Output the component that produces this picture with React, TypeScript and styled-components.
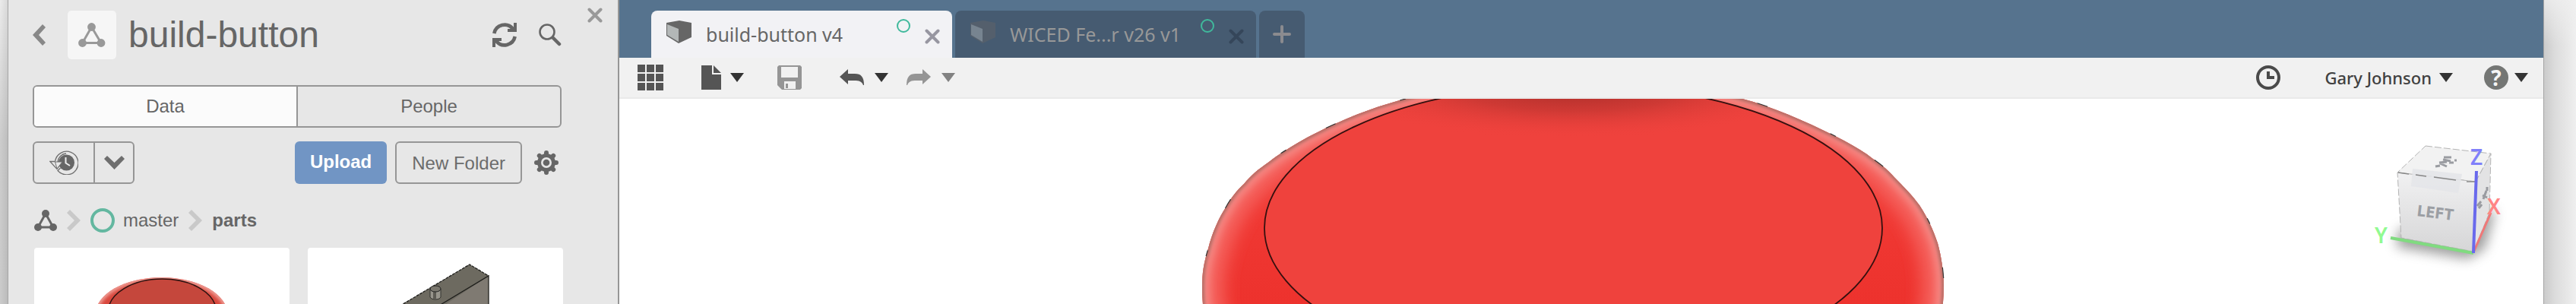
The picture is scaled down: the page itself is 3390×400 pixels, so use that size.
import React from "react";
import styled, { createGlobalStyle } from "styled-components";

const ui = `"Liberation Sans", Arial, sans-serif`;
const humanist = `"Noto Sans", "Open Sans", sans-serif`;

const GlobalStyle = createGlobalStyle`
  *, *::before, *::after { box-sizing: border-box; }
  body { margin: 0; background: #e4e4e4; }
  button { font: inherit; color: inherit; background: none; border: 0; padding: 0; margin: 0; cursor: pointer; }
  a { color: inherit; text-decoration: none; }
  svg { display: block; flex: none; }
`;

const Desktop = styled.div`
  display: grid;
  grid-template-columns: 11px minmax(0, 1fr) 43px;
  height: 100vh;
  overflow: hidden;
`;

const LeftEdge = styled.div`
  background: linear-gradient(to right, rgba(0, 0, 0, 0), rgba(0, 0, 0, 0.08)),
    linear-gradient(#ebebeb, #cdcdcd 45%, #cbcbcb);
  border-right: 1px solid #a6a6a6;
`;

const RightEdge = styled.div`
  border-left: 1px solid #a4a4a4;
  background: linear-gradient(rgba(240, 240, 240, 0.75), rgba(240, 240, 240, 0) 60px),
    linear-gradient(to right, #cbcbcb, #dcdcdc 35%, #efefef);
`;

const AppWindow = styled.div`
  display: flex;
  min-width: 0;
  background: #fff;
`;

const DataPanel = styled.aside`
  display: flex;
  flex-direction: column;
  flex: none;
  width: 804px;
  padding: 14px 74px 0 32px;
  position: relative;
  background: #e7e7e7;
  border-right: 2px solid #969696;
  color: #666;
  font: 24px/28px ${ui};
`;

const PanelHeader = styled.header`
  display: flex;
  align-items: center;
  margin-bottom: 34px;
`;

const ProjectBadge = styled.div`
  display: flex;
  align-items: center;
  justify-content: center;
  width: 64px;
  height: 64px;
  margin: 0 16px 0 29px;
  border-radius: 5px;
  background: #f6f6f6;
  color: #999;
`;

const Title = styled.h1`
  flex: 1;
  margin: 0;
  font-size: 48px;
  line-height: 64px;
  font-weight: 400;
`;

const IconButton = styled.button<{ $tone?: string; $gap?: number; $end?: number }>`
  display: flex;
  align-items: center;
  justify-content: center;
  margin-left: ${({ $gap = 0 }) => $gap}px;
  margin-right: ${({ $end = 0 }) => $end}px;
  color: ${({ $tone = "#666" }) => $tone};
`;

const ClosePanel = styled(IconButton)`
  position: absolute;
  top: 10px;
  right: 20px;
`;

const Segmented = styled.div`
  display: flex;
  height: 56px;
  margin-bottom: 18px;
  border: 2px solid #969696;
  border-radius: 6px;
  overflow: hidden;
`;

const Segment = styled.button<{ $active?: boolean }>`
  flex: 1;
  background: ${({ $active }) => ($active ? "#fbfbfb" : "transparent")};
  & + & { border-left: 2px solid #969696; }
`;

const ActionRow = styled.div`
  display: flex;
  align-items: center;
  height: 56px;
  margin-bottom: 32px;
`;

const SplitButton = styled.div`
  display: flex;
  height: 56px;
  margin-right: auto;
  border: 2px solid #969696;
  border-radius: 6px;
`;

const SplitPart = styled.button<{ $width: number }>`
  display: flex;
  align-items: center;
  justify-content: center;
  width: ${({ $width }) => $width}px;
  & + & { border-left: 2px solid #969696; }
`;

const ActionButton = styled.button<{ $primary?: boolean }>`
  height: 56px;
  padding: ${({ $primary }) => ($primary ? "0 20px 2px" : "2px 20px 0")};
  border: ${({ $primary }) => ($primary ? "0" : "2px solid #969696")};
  border-radius: 6px;
  background: ${({ $primary }) => ($primary ? "#7195c4" : "transparent")};
  color: ${({ $primary }) => ($primary ? "#fff" : "#6c6c6c")};
  font-weight: ${({ $primary }) => ($primary ? 700 : 400)};
  & + & { margin-left: 11px; }
`;

const Breadcrumb = styled.nav`
  display: flex;
  align-items: center;
  gap: 13px;
  height: 32px;
  margin-bottom: 20px;
  padding-left: 2px;
`;

const Crumb = styled.a<{ $current?: boolean }>`
  display: flex;
  align-items: center;
  gap: 11px;
  font-weight: ${({ $current }) => ($current ? 700 : 400)};
`;

const CardGrid = styled.div`
  display: grid;
  grid-template-columns: 336px 336px;
  gap: 24px;
  flex: 1;
  min-height: 0;
  padding-left: 2px;
`;

const Card = styled.a`
  display: flex;
  justify-content: center;
  overflow: hidden;
  border-radius: 4px 4px 0 0;
  background: #fff;
`;

const Workspace = styled.main`
  display: flex;
  flex-direction: column;
  flex: 1;
  min-width: 0;
`;

const TabBar = styled.div`
  display: flex;
  align-items: flex-end;
  gap: 4px;
  height: 76px;
  padding-left: 42px;
  background: #56738e;
  font: 25px/34px ${humanist};
`;

const DocumentTab = styled.div<{ $active?: boolean }>`
  display: flex;
  align-items: center;
  width: 396px;
  height: 62px;
  padding: 0 16px 0 20px;
  border-radius: 8px 8px 0 0;
  background: ${({ $active }) => ($active ? "#f2f2f5" : "#465b71")};
  color: ${({ $active }) => ($active ? "#666" : "#989898")};
`;

const TabIcon = styled.span<{ $dim?: boolean }>`
  opacity: ${({ $dim }) => ($dim ? 0.45 : 1)};
  padding-bottom: 6px;
`;

const TabLabel = styled.button`
  flex: 1;
  padding-left: 19px;
  text-align: left;
  white-space: nowrap;
`;

const SyncDot = styled.span`
  width: 18px;
  height: 18px;
  margin: 0 19px 22px 0;
  border: 2px solid #40b99c;
  border-radius: 50%;
`;

const TabClose = styled(IconButton)`
  padding-top: 6px;
`;

const NewTab = styled.button`
  display: flex;
  align-items: center;
  justify-content: center;
  width: 60px;
  height: 62px;
  border-radius: 8px 8px 0 0;
  background: #465b71;
  color: #8b8b8f;
`;

const Toolbar = styled.div`
  display: flex;
  align-items: center;
  height: 54px;
  padding: 0 20px 0 24px;
  border-bottom: 2px solid #e9e9e9;
  background: #f1f1f1;
  color: #555;
`;

const ToolGroup = styled.button<{ $gap: number; $before?: number; $tone?: string }>`
  display: flex;
  align-items: center;
  gap: ${({ $gap }) => $gap}px;
  margin-left: ${({ $before = 0 }) => $before}px;
  color: ${({ $tone = "#555" }) => $tone};
`;

const Spacer = styled.div`
  flex: 1;
`;

const UserName = styled.span`
  color: #404040;
  font: 500 22px/30px ${humanist};
`;

const HelpMark = styled.span`
  display: flex;
  align-items: center;
  justify-content: center;
  width: 32px;
  height: 32px;
  border-radius: 50%;
  background: #747674;
  color: #f5f5f5;
  font: 700 28px/32px ${humanist};
`;

const Viewport = styled.section`
  display: flex;
  justify-content: center;
  position: relative;
  flex: 1;
  min-height: 0;
  overflow: hidden;
  background: #fff;
`;

const CubeHolder = styled.div`
  position: absolute;
  top: 55px;
  right: 47px;
`;

const Nodes = ({ small }: { small?: boolean }) =>
  small ? (
    <svg width="30" height="28" fill="currentColor">
      <path d="M15 5 25 23H5Z" fill="none" stroke="currentColor" strokeWidth="3" />
      <circle cx="15" cy="5" r="5" /><circle cx="5" cy="23" r="5" /><circle cx="25" cy="23" r="5" />
    </svg>
  ) : (
    <svg width="36" height="32" fill="currentColor">
      <path d="M17.5 5.5 30 26.5H5.5Z" fill="none" stroke="currentColor" strokeWidth="3" />
      <circle cx="17.5" cy="5.5" r="5.4" /><circle cx="5.5" cy="26.5" r="5.4" /><circle cx="30" cy="26.5" r="5.4" />
    </svg>
  );

const Refresh = () => (
  <svg width="32" height="32">
    {[0, 180].map((turn) => (
      <g key={turn} transform={`rotate(${turn} 16 16)`}>
        <path d="M2.3 14A14 14 0 0 1 27 8" fill="none" stroke="currentColor" strokeWidth="4.6" />
        <path d="M28 0h4v12H20V8h3l5-2z" fill="currentColor" />
      </g>
    ))}
  </svg>
);

const Search = () => (
  <svg width="30" height="30" fill="none" stroke="currentColor">
    <circle cx="11" cy="11" r="9.5" strokeWidth="2.6" />
    <path d="M19 19 27 27" strokeWidth="4.5" strokeLinecap="round" />
  </svg>
);

const Cross = () => (
  <svg width="20" height="20" fill="none" stroke="currentColor" strokeWidth="4" strokeLinecap="round">
    <path d="M2.5 2.5 17.5 17.5M17.5 2.5 2.5 17.5" />
  </svg>
);

const History = () => (
  <svg width="38" height="32" fill="none">
    <path d="M7.5 14.5A15.3 15.3 0 1 1 11 26.5L14.5 23M7.5 14.5H.8L10 24.5 17 15H11A11.8 11.8 0 0 1 22 4" stroke="#707070" strokeWidth="1.3" />
    <circle cx="22.5" cy="16" r="10.5" fill="#666" />
    <path d="M21.5 9V16.5L27 20" stroke="#eee" strokeWidth="2" />
    <path d="M7.5 15H17L10 24Z" fill="#e7e7e7" stroke="#707070" />
  </svg>
);

const Gear = () => (
  <svg width="32" height="32">
    <g stroke="currentColor" strokeWidth="6" strokeLinecap="round">
      {[0, 45, 90, 135].map((turn) => (
        <path key={turn} d="M16 3V29" transform={`rotate(${turn} 16 16)`} />
      ))}
    </g>
    <circle cx="16" cy="16" r="12" fill="currentColor" />
    <circle cx="16" cy="16" r="7" fill="#e7e7e7" />
    <circle cx="16" cy="16" r="4.3" fill="currentColor" />
  </svg>
);

const CrumbArrow = () => (
  <svg width="18" height="28"><path d="M0 4 4 0 18 14 4 28 0 24 10 14Z" fill="#c9c9c9" /></svg>
);

const Ring = () => (
  <svg width="32" height="32"><circle cx="16" cy="16" r="14" fill="none" stroke="#63b7a0" strokeWidth="4" /></svg>
);

const Caret = ({ tone = "#333" }: { tone?: string }) => (
  <svg width="18" height="12"><path d="M0 0H18L9 12Z" fill={tone} /></svg>
);

const CubeIcon = () => (
  <svg width="33" height="30">
    <path d="M0 3 17 0 33 3V22L16 30 0 20Z" fill="#666" />
    <path d="M1 5 16 11V28L1 19Z" fill="#b3b7b7" />
  </svg>
);

const AppGrid = () => (
  <svg width="34" height="34" fill="currentColor">
    {[0, 12, 24].map((y) => [0, 12, 24].map((x) => <rect key={`${x}-${y}`} x={x} y={y} width="10" height="10" />))}
  </svg>
);

const FileIcon = () => (
  <svg width="26" height="32" fill="currentColor"><path d="M0 0H14V12H26V32H0ZM16 0 26 10H16Z" /></svg>
);

const SaveIcon = () => (
  <svg width="32" height="32" fill="currentColor" fillRule="evenodd">
    <path d="M2 0H30L32 2V30L30 32H6L0 26V2ZM5 2V16H27V2ZM9 21V31H24V21ZM11 24H14V30H11Z" />
  </svg>
);

const Arrow = ({ flip }: { flip?: boolean }) => (
  <svg width="32" height="22" fill="currentColor">
    <path
      transform={flip ? "matrix(-1 0 0 1 32 0)" : undefined}
      d="M0 10 11 0V6H20C28 6 32 10 32 21H31C29 16 26 15 19 15H11V20Z"
    />
  </svg>
);

const Clock = () => (
  <svg width="32" height="32">
    <circle cx="16" cy="16" r="14" fill="none" stroke="#4a4a4a" strokeWidth="4" />
    <path d="M14 8H18V14H24V18H14Z" fill="#4a4a4a" />
  </svg>
);

const domeOutline =
  "M279 0C230 12 180 34 142 55C130 62 110 74 99 83C83 94 75 101 66 112C56 121 48 132 42 143C34 155 24 176 19 197C13 217 11 228 11 250C11 300 30 360 60 420H940C970 360 987 300 987 245C987 230 984 208 979 190C973 172 965 155 955 140C940 120 930 112 919 100C908 88 896 81 886 73C872 64 860 57 846 50C802 28 760 10 722 0C640 -26 360 -26 279 0Z";

const DomeModel = () => (
  <svg width="1020" height="270" viewBox="0 0 1020 270" role="img" aria-label="Red button model">
    <defs>
      <clipPath id="dome"><path d={domeOutline} /></clipPath>
      <clipPath id="face"><ellipse cx="499.5" cy="170" rx="406.5" ry="189" /></clipPath>
      <filter id="soft12" x="-10%" y="-20%" width="120%" height="140%"><feGaussianBlur stdDeviation="11" /></filter>
      <filter id="soft4" x="-10%" y="-20%" width="120%" height="140%"><feGaussianBlur stdDeviation="5" /></filter>
      <filter id="soft1"><feGaussianBlur stdDeviation="2" /></filter>
      <linearGradient id="side" gradientUnits="userSpaceOnUse" x1="0" y1="0" x2="0" y2="270">
        <stop offset="0" stopColor="#f3403b" />
        <stop offset="1" stopColor="#ed322d" />
      </linearGradient>
      <radialGradient id="shade">
        <stop offset="0" stopColor="#a52c28" stopOpacity="0.95" />
        <stop offset="0.45" stopColor="#b8332e" stopOpacity="0.6" />
        <stop offset="1" stopColor="#ef423d" stopOpacity="0" />
      </radialGradient>
    </defs>
    <g clipPath="url(#dome)">
      <path d={domeOutline} fill="url(#side)" />
      <path d={domeOutline} fill="none" stroke="#f5635e" strokeWidth="56" filter="url(#soft12)" />
      <path d={domeOutline} fill="none" stroke="#f58682" strokeWidth="20" filter="url(#soft4)" />
      <path d={domeOutline} fill="none" stroke="#a8685e" strokeWidth="5" filter="url(#soft1)" />
    </g>
    <g clipPath="url(#face)">
      <rect width="1020" height="270" fill="#ef423d" />
      <ellipse cx="499" cy="-14" rx="330" ry="66" fill="url(#shade)" />
    </g>
    <ellipse cx="499.5" cy="170" rx="406.5" ry="189" fill="none" stroke="#35100f" strokeWidth="1.8" />
    <path d={domeOutline} fill="none" stroke="#333" strokeWidth="1.2" strokeDasharray="8 90 14 60" />
  </svg>
);

const ViewCube = () => (
  <svg width="180" height="180" viewBox="0 0 180 180" role="img" aria-label="View cube">
    <defs>
      <linearGradient id="front" x2="0" y2="1"><stop stopColor="#f1f1f2" /><stop offset="1" stopColor="#d6d6d7" /></linearGradient>
      <filter id="shadow" x="-30%" y="-30%" width="160%" height="180%"><feGaussianBlur stdDeviation="8" /></filter>
    </defs>
    <path d="M36 118 100 100 164 92 150 142 128 156 34 140Z" fill="#777" opacity="0.7" filter="url(#shadow)" />
    <g stroke="#b4b4b4" strokeWidth="1" strokeDasharray="9 3">
      <path d="M72 7 158 17 138 54 35 42Z" fill="#f2f2f2" />
      <path d="M35 42 138 54 135 146 40 128Z" fill="url(#front)" />
      <path d="M138 54 158 17 156 95 135 146Z" fill="#e3e3e4" />
    </g>
    <path d="M55 37 120 44 115 69 53 60Z" fill="#e4e5e9" opacity="0.85" />
    <path d="M36 42 50 44M59 45 73 47M83 48 112 52M126 54 138 54" stroke="#888" strokeWidth="1.5" />
    <path d="M96 22H106M95 25 105 27M90 29 100 28M85 34 91 33M91 30 100 34M103 29 109 29M110 26H113" stroke="#9a9ca1" strokeWidth="3" />
    <path d="M140 86 145 80M142 89 146 84M148 77 152 66M147 72 153 75M153 61V66" stroke="#999ba0" strokeWidth="3" />
    <text x="60" y="99" transform="rotate(7 60 99)" fontFamily="DejaVu Sans Condensed, DejaVu Sans, sans-serif" fontWeight="700" fontSize="20" fill="#9b9ea3">LEFT</text>
    <path d="M26 128 135 148" stroke="#80db80" strokeWidth="4" />
    <path d="M135 147 158 95" stroke="#f07878" strokeWidth="3" />
    <path d="M139 40 135 148" stroke="#6969ec" strokeWidth="4" />
    <g fontFamily="Noto Sans, sans-serif" fontSize="28" fontWeight="600">
      <text x="131" y="32" fill="#8080fa">Z</text>
      <text x="153" y="97" fill="#ff8585">X</text>
      <text x="5" y="135" fill="#91fa91">Y</text>
    </g>
  </svg>
);

const DomeThumb = () => (
  <svg width="336" height="80" viewBox="0 0 336 80" role="img" aria-label="Button cap">
    <defs>
      <filter id="thumbSoft"><feGaussianBlur stdDeviation="2" /></filter>
      <clipPath id="thumb"><ellipse cx="167.5" cy="88" rx="87" ry="49" /></clipPath>
    </defs>
    <ellipse cx="167.5" cy="88" rx="87" ry="49" fill="#d9483e" />
    <g clipPath="url(#thumb)">
      <ellipse cx="167.5" cy="88" rx="87" ry="49" fill="none" stroke="#f0a29a" strokeWidth="6" filter="url(#thumbSoft)" />
    </g>
    <ellipse cx="168.5" cy="84" rx="71" ry="43" fill="#c5473c" stroke="#2b1210" strokeWidth="1.5" />
  </svg>
);

const BlockThumb = () => (
  <svg width="336" height="80" viewBox="0 0 336 80" role="img" aria-label="Base plate">
    <path d="M117 79 213 22 238 37V80H117Z" fill="#6d6a60" />
    <path d="M173 80 238 37V80Z" fill="#7f7a72" />
    <g fill="none" stroke="#1f1f1c" strokeWidth="1.3">
      <path d="M117 79 213 22 238 37" strokeDasharray="4 1" />
      <path d="M173 76 238 37V80" />
    </g>
    <path d="M161 54V65C163 69 173 69 175 65V54Z" fill="#98958c" stroke="#33322e" />
    <path d="M165 57V67H169V57Z" fill="#5d5b54" />
    <ellipse cx="168" cy="54" rx="7" ry="4" fill="#7a776e" stroke="#222" />
  </svg>
);

export default function App() {
  return (
    <>
      <GlobalStyle />
      <Desktop>
        <LeftEdge />
        <AppWindow>
          <DataPanel>
            <PanelHeader>
              <IconButton aria-label="Back" $tone="#888">
                <svg width="17" height="28"><path d="M0 14 13 0 17 4 8 14 17 24 13 28Z" fill="currentColor" /></svg>
              </IconButton>
              <ProjectBadge><Nodes /></ProjectBadge>
              <Title>build-button</Title>
              <IconButton aria-label="Refresh"><Refresh /></IconButton>
              <IconButton aria-label="Search" $gap={29}><Search /></IconButton>
            </PanelHeader>
            <ClosePanel aria-label="Close panel" $tone="#999"><Cross /></ClosePanel>
            <Segmented>
              <Segment $active>Data</Segment>
              <Segment>People</Segment>
            </Segmented>
            <ActionRow>
              <SplitButton>
                <SplitPart $width={78} aria-label="Recent"><History /></SplitPart>
                <SplitPart $width={52} aria-label="Recent options">
                  <svg width="27" height="18"><path d="M0 4 4 0 13.5 9 23 0 27 4 13.5 18Z" fill="#6e6e6e" /></svg>
                </SplitPart>
              </SplitButton>
              <ActionButton $primary>Upload</ActionButton>
              <ActionButton>New Folder</ActionButton>
              <IconButton aria-label="Settings" $gap={16} $end={4}><Gear /></IconButton>
            </ActionRow>
            <Breadcrumb aria-label="Breadcrumb">
              <Crumb href="#project" aria-label="Project"><Nodes small /></Crumb>
              <CrumbArrow />
              <Crumb href="#master"><Ring />master</Crumb>
              <CrumbArrow />
              <Crumb href="#parts" $current>parts</Crumb>
            </Breadcrumb>
            <CardGrid>
              <Card href="#cap"><DomeThumb /></Card>
              <Card href="#plate"><BlockThumb /></Card>
            </CardGrid>
          </DataPanel>
          <Workspace>
            <TabBar>
              <DocumentTab $active>
                <TabIcon><CubeIcon /></TabIcon>
                <TabLabel>build-button v4</TabLabel>
                <SyncDot />
                <TabClose aria-label="Close build-button v4" $tone="#9796a1"><Cross /></TabClose>
              </DocumentTab>
              <DocumentTab>
                <TabIcon $dim><CubeIcon /></TabIcon>
                <TabLabel>WICED Fe...r v26 v1</TabLabel>
                <SyncDot />
                <TabClose aria-label="Close WICED Fe...r v26 v1" $tone="#35465a"><Cross /></TabClose>
              </DocumentTab>
              <NewTab aria-label="New tab">
                <svg width="24" height="24" fill="none" stroke="currentColor" strokeWidth="4" strokeLinecap="round">
                  <path d="M12 2V22M2 12H22" />
                </svg>
              </NewTab>
            </TabBar>
            <Toolbar>
              <ToolGroup $gap={0} aria-label="Show data panel"><AppGrid /></ToolGroup>
              <ToolGroup $gap={12} $before={50} aria-label="File"><FileIcon /><Caret /></ToolGroup>
              <ToolGroup $gap={0} $before={44} $tone="#959595" aria-label="Save"><SaveIcon /></ToolGroup>
              <ToolGroup $gap={14} $before={50} aria-label="Undo"><Arrow /><Caret /></ToolGroup>
              <ToolGroup $gap={14} $before={24} $tone="#959595" aria-label="Redo"><Arrow flip /><Caret tone="#828282" /></ToolGroup>
              <Spacer />
              <ToolGroup $gap={0} aria-label="Job status"><Clock /></ToolGroup>
              <ToolGroup $gap={10} $before={58}><UserName>Gary Johnson</UserName><Caret /></ToolGroup>
              <ToolGroup $gap={8} $before={41} aria-label="Help"><HelpMark>?</HelpMark><Caret /></ToolGroup>
            </Toolbar>
            <Viewport>
              <DomeModel />
              <CubeHolder><ViewCube /></CubeHolder>
            </Viewport>
          </Workspace>
        </AppWindow>
        <RightEdge />
      </Desktop>
    </>
  );
}
